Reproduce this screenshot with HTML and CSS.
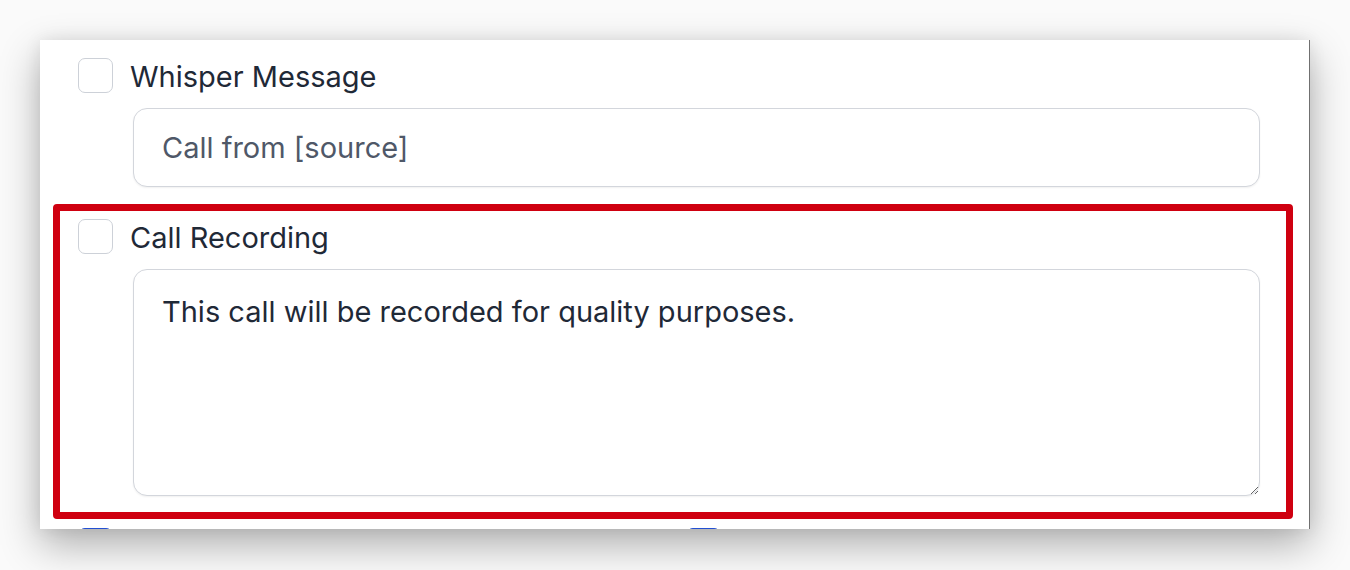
FILE: index.html
```html
<!DOCTYPE html>
<html lang="en">
<head>
<meta charset="utf-8">
<title>Call settings</title>
<link rel="stylesheet" href="styles.css">
</head>
<body>
<div class="window">
  <div class="field">
    <label class="row">
      <input type="checkbox" class="check">
      <span class="label">Whisper Message</span>
    </label>
    <input type="text" class="control input" placeholder="Call from [source]">
  </div>

  <div class="highlight">
    <div class="field">
      <label class="row">
        <input type="checkbox" class="check">
        <span class="label">Call Recording</span>
      </label>
      <textarea class="control textarea">This call will be recorded for quality purposes.</textarea>
    </div>
  </div>

  <div class="options">
    <div class="row">
      <input type="checkbox" class="check" checked aria-label="Voicemail">
    </div>
    <div class="row">
      <input type="checkbox" class="check" checked aria-label="Call Forwarding">
    </div>
  </div>
</div>
</body>
</html>
```

FILE: styles.css
```css
* {
  box-sizing: border-box;
}

html, body {
  margin: 0;
  padding: 0;
}

body {
  background: #fafafa;
  width: 1350px;
  height: 570px;
  overflow: hidden;
  font-family: Inter, "Noto Sans", "Liberation Sans", sans-serif;
  color: #1f2937;
}

.window {
  margin: 40px 0 0 40px;
  width: 1270px;
  height: 489px;
  overflow: hidden;
  background: #ffffff;
  border-right: 1px solid #707070;
  box-shadow: 0 16px 38px rgba(0, 0, 0, 0.3), 0 0 16px rgba(0, 0, 0, 0.08);
  padding-top: 18px;
}

.field {
  margin-left: 38px;
  display: flex;
  flex-direction: column;
}

.highlight .field {
  margin-left: 0;
}

.row {
  display: flex;
  align-items: center;
  gap: 17px;
  height: 35px;
}

.check {
  appearance: none;
  -webkit-appearance: none;
  margin: 0;
  width: 35px;
  height: 35px;
  flex: 0 0 35px;
  border: 1.5px solid #cdd1d8;
  border-radius: 7px;
  background: #ffffff;
}

.check:checked {
  background: #2350d2;
  border-color: #2350d2;
}

.label {
  font-size: 29px;
  line-height: 35px;
  color: #1f2937;
  position: relative;
  top: 1px;
}

.control {
  margin: 15px 0 0 55px;
  width: 1127px;
  border: 1.5px solid #d3d6dc;
  border-radius: 14px;
  background: #ffffff;
  box-shadow: 0 1px 2px rgba(0, 0, 0, 0.06);
  font-family: Inter, "Noto Sans", "Liberation Sans", sans-serif;
  font-size: 29px;
  color: #1f2937;
  outline: none;
}

.input {
  height: 79px;
  padding: 0 28px;
}

.input::placeholder {
  color: #4f5868;
  opacity: 1;
}

.textarea {
  height: 227px;
  padding: 21px 28px;
  line-height: 42px;
  resize: vertical;
  display: block;
}

.highlight {
  margin: 17px 0 0 13px;
  width: 1240px;
  border: 7px solid #cf0010;
  border-radius: 4px;
  padding: 8px 0 16px 18px;
}

.options {
  margin: 9px 0 0 38px;
  width: 1216px;
  display: grid;
  grid-template-columns: repeat(2, 1fr);
}
```
